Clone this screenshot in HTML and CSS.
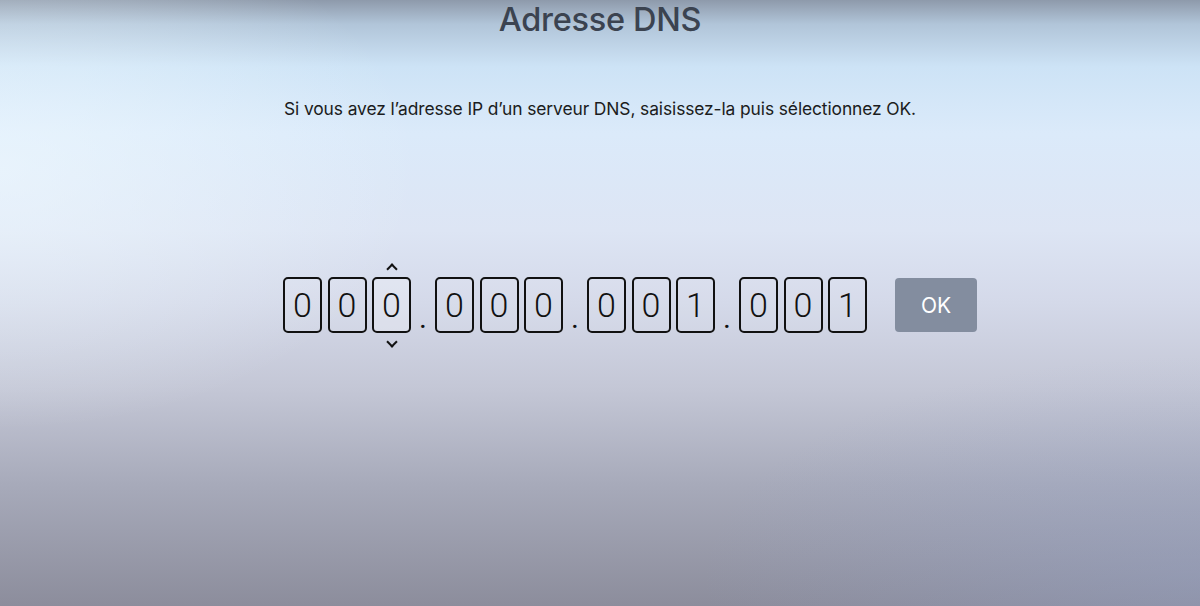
FILE: index.html
```html
<!DOCTYPE html>
<html lang="fr">
<head>
    <meta charset="UTF-8">
    <meta name="viewport" content="width=device-width, initial-scale=1.0">
    <title>Adresse DNS</title>
    <link rel="stylesheet" href="styles.css">
</head>
<body>
    <div class="screen">
        <h1 class="title">Adresse DNS</h1>
        <p class="hint">Si vous avez l’adresse IP d’un serveur DNS, saisissez-la puis sélectionnez OK.</p>

        <div class="entry">
            <div class="octet">
                <div class="cell">0</div>
                <div class="cell">0</div>
                <div class="cell focused">0
                    <span class="chevron up"></span>
                    <span class="chevron down"></span>
                </div>
            </div>
            <span class="dot">.</span>
            <div class="octet">
                <div class="cell">0</div>
                <div class="cell">0</div>
                <div class="cell">0</div>
            </div>
            <span class="dot">.</span>
            <div class="octet">
                <div class="cell">0</div>
                <div class="cell">0</div>
                <div class="cell">1</div>
            </div>
            <span class="dot">.</span>
            <div class="octet">
                <div class="cell">0</div>
                <div class="cell">0</div>
                <div class="cell">1</div>
            </div>
            <button class="ok">OK</button>
        </div>
    </div>
</body>
</html>
```

FILE: styles.css
```css
html, body {
    margin: 0;
    height: 100%;
}

body {
    font-family: Inter, "Liberation Sans", sans-serif;
    background:
        radial-gradient(ellipse 420px 260px at 0% 28%, rgba(240, 250, 255, 0.6), rgba(240, 250, 255, 0) 100%),
        radial-gradient(ellipse 500px 220px at 100% 95%, rgba(150, 165, 205, 0.35), rgba(150, 165, 205, 0) 100%),
        linear-gradient(to bottom,
            #8e9aab 0%,
            #b1c5d9 4%,
            #cde3f6 11%,
            #dbeafa 22%,
            #dde5f4 38%,
            #d4d9e9 50%,
            #c4c7d6 64%,
            #a7aaba 80%,
            #8c8d9c 100%);
    overflow: hidden;
}

.screen {
    display: flex;
    flex-direction: column;
    align-items: center;
    height: 606px;
}

.title {
    margin: 0;
    padding-top: 1px;
    font-size: 32.5px;
    line-height: 38px;
    font-weight: 500;
    color: #3b4350;
    letter-spacing: -0.3px;
}

.hint {
    margin: 60px 0 0;
    font-size: 17.4px;
    line-height: 20px;
    color: #1b1c20;
    letter-spacing: -0.1px;
}

.entry {
    display: flex;
    align-items: center;
    margin-top: 158px;
    margin-left: 60px;
}

.octet {
    display: flex;
    gap: 5.5px;
}

.cell {
    position: relative;
    width: 35px;
    height: 52px;
    border: 2px solid #111;
    border-radius: 5px;
    background-color: rgba(255, 255, 255, 0.08);
    display: flex;
    justify-content: center;
    align-items: center;
    font-family: Roboto, "Liberation Sans", sans-serif;
    font-weight: 300;
    font-size: 34px;
    color: #111;
}

.cell.focused {
    background-color: rgba(255, 255, 255, 0.25);
}

.chevron {
    position: absolute;
    left: 50%;
    width: 6px;
    height: 6px;
    border-left: 2px solid #111;
    border-top: 2px solid #111;
    margin-left: -4px;
}

.chevron.up {
    top: -14px;
    transform: rotate(45deg);
}

.chevron.down {
    bottom: -15px;
    transform: rotate(225deg);
}

.dot {
    width: 24px;
    text-align: center;
    align-self: flex-end;
    font-family: Roboto, sans-serif;
    font-size: 30px;
    line-height: 30px;
    color: #111;
}

.ok {
    margin-left: 28px;
    width: 82px;
    height: 54px;
    border: none;
    border-radius: 4px;
    background-color: #838d9f;
    color: #fff;
    font-family: Inter, "Liberation Sans", sans-serif;
    font-size: 21px;
    font-weight: 400;
}
```
